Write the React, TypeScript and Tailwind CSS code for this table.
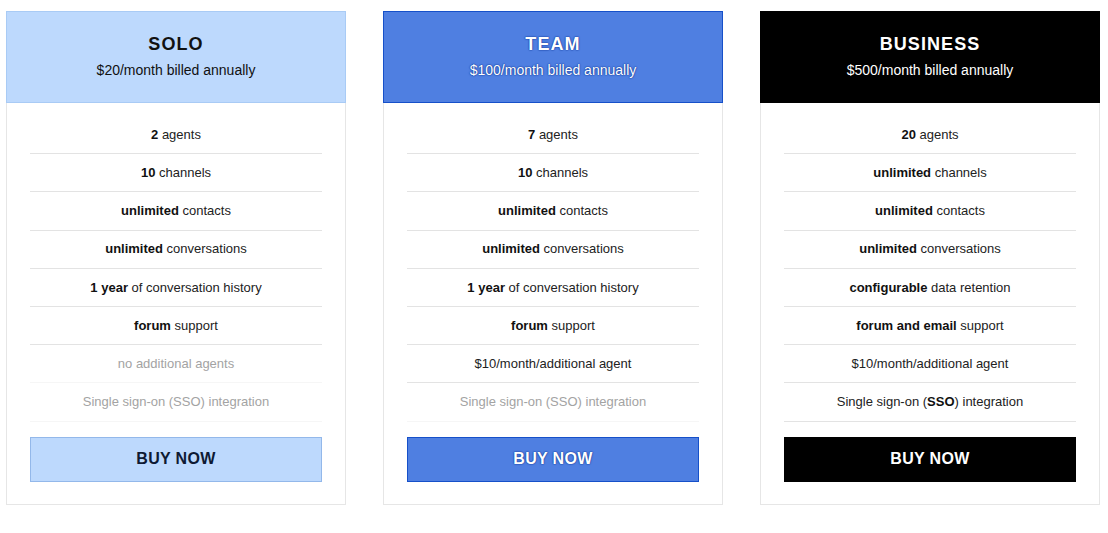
import { ReactNode } from "react";

interface Feature {
  content: ReactNode;
  muted?: boolean;
}

interface Plan {
  name: string;
  price: string;
  header: string;
  button: string;
  features: Feature[];
}

const plans: Plan[] = [
  {
    name: "SOLO",
    price: "$20/month billed annually",
    header: "bg-[#bdd9fd] border border-[#a9cbf5] text-[#111]",
    button: "bg-[#bdd9fd] border border-[#93b8ea] text-[#0e1a33]",
    features: [
      { content: <><b>2</b> agents</> },
      { content: <><b>10</b> channels</> },
      { content: <><b>unlimited</b> contacts</> },
      { content: <><b>unlimited</b> conversations</> },
      { content: <><b>1 year</b> of conversation history</> },
      { content: <><b>forum</b> support</> },
      { content: "no additional agents", muted: true },
      { content: "Single sign-on (SSO) integration", muted: true },
    ],
  },
  {
    name: "TEAM",
    price: "$100/month billed annually",
    header:
      "bg-[#4f7fe1] border border-[#1650c9] text-white [text-shadow:0_0_2px_#0d3597,0_0_1px_#0d3597]",
    button:
      "bg-[#4f7fe1] border border-[#1650c9] text-white [text-shadow:0_0_2px_#0d3597,0_0_1px_#0d3597]",
    features: [
      { content: <><b>7</b> agents</> },
      { content: <><b>10</b> channels</> },
      { content: <><b>unlimited</b> contacts</> },
      { content: <><b>unlimited</b> conversations</> },
      { content: <><b>1 year</b> of conversation history</> },
      { content: <><b>forum</b> support</> },
      { content: "$10/month/additional agent" },
      { content: "Single sign-on (SSO) integration", muted: true },
    ],
  },
  {
    name: "BUSINESS",
    price: "$500/month billed annually",
    header: "bg-black border border-black text-white",
    button: "bg-black border border-black text-white",
    features: [
      { content: <><b>20</b> agents</> },
      { content: <><b>unlimited</b> channels</> },
      { content: <><b>unlimited</b> contacts</> },
      { content: <><b>unlimited</b> conversations</> },
      { content: <><b>configurable</b> data retention</> },
      { content: <><b>forum and email</b> support</> },
      { content: "$10/month/additional agent" },
      { content: <>Single sign-on (<b>SSO</b>) integration</> },
    ],
  },
];

const PlanCard = ({ plan }: { plan: Plan }) => (
  <div className="w-[340px] border border-[#e6e6e6] bg-white">
    <div className={`-m-px flex h-[92px] flex-col items-center justify-center ${plan.header}`}>
      <h2 className="-mt-[2px] text-[18px] font-bold leading-none tracking-[0.06em]">{plan.name}</h2>
      <p className="mt-[10px] text-[14px] leading-none">{plan.price}</p>
    </div>
    <div className="px-[23px] pt-[14px] pb-[22px]">
      <ul>
        {plan.features.map((f, i) => (
          <li
            key={i}
            className={`flex h-[38.2px] items-center justify-center border-b text-[13px] ${
              f.muted ? "border-[#f6f6f6] text-[#a3a3a3]" : "border-[#e3e3e3] text-[#222]"
            }`}
          >
            <span className="[&_b]:font-semibold [&_b]:text-[#111]">{f.content}</span>
          </li>
        ))}
      </ul>
      <button
        className={`mt-[15px] flex h-[45px] w-full items-center justify-center text-[16px] font-bold tracking-[0.02em] ${plan.button}`}
      >
        BUY NOW
      </button>
    </div>
  </div>
);

export default function App() {
  return (
    <div className="h-[533px] w-[1108px] bg-white pl-[6px] pt-[11px] font-['Liberation_Sans',Arial,sans-serif]">
      <div className="flex gap-[37px]">
        {plans.map((p) => (
          <PlanCard key={p.name} plan={p} />
        ))}
      </div>
    </div>
  );
}
